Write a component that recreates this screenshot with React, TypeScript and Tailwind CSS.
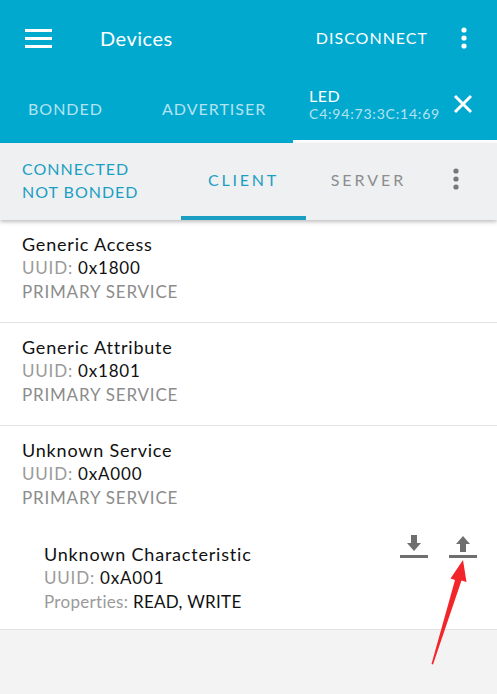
import React from 'react';

const font = { fontFamily: 'Lato, "Open Sans", sans-serif' };

function Kebab({ color }: { color: string }) {
  return (
    <svg width="6" height="22" viewBox="0 0 6 22">
      <circle cx="3" cy="3" r="2.6" fill={color} />
      <circle cx="3" cy="11" r="2.6" fill={color} />
      <circle cx="3" cy="19" r="2.6" fill={color} />
    </svg>
  );
}

function ServiceItem({ name, uuid }: { name: string; uuid: string }) {
  return (
    <div className="pl-[22px] pt-[12px] pb-[18px] leading-[24px]">
      <div className="text-[18px] text-[#111] tracking-[0.8px]">{name}</div>
      <div className="text-[17px] tracking-[0.8px]">
        <span className="text-[#9a9a9a]">UUID: </span>
        <span className="text-[#111]">{uuid}</span>
      </div>
      <div className="text-[17px] text-[#8c8c8c] tracking-[0.8px]">PRIMARY SERVICE</div>
    </div>
  );
}

export default function App() {
  return (
    <div className="relative w-[497px] h-[694px] bg-[#f3f3f3] overflow-hidden" style={font}>
      {/* Top bar */}
      <div className="bg-[#02a9cf] text-white">
        <div className="flex items-center h-[76px] pl-[25px] pr-[30px]">
          <svg width="27" height="20" viewBox="0 0 27 20">
            <rect x="0" y="1" width="27" height="3" fill="white" />
            <rect x="0" y="9" width="27" height="3" fill="white" />
            <rect x="0" y="17" width="27" height="3" fill="white" />
          </svg>
          <div className="ml-[48px] text-[20px] tracking-[0.5px]">Devices</div>
          <div className="ml-auto text-[16px] tracking-[1px]">DISCONNECT</div>
          <div className="ml-[33px]">
            <Kebab color="white" />
          </div>
        </div>
        <div className="flex h-[67px]">
          <div className="w-[146px] flex items-center pl-[28px] pb-[1px] text-[16px] text-[#b4e3f0] tracking-[1px]">BONDED</div>
          <div className="w-[147px] flex items-center pl-[16px] pb-[1px] text-[16px] text-[#b4e3f0] tracking-[1px]">ADVERTISER</div>
          <div className="flex-1 flex flex-col">
            <div className="flex-1 flex items-center pl-[16px] pr-[24px]">
              <div className="leading-[18px] -mt-[6px]">
                <div className="text-[16px] text-white tracking-[0.5px]">LED</div>
                <div className="text-[14px] text-[#b4e3f0] tracking-[0.8px]">C4:94:73:3C:14:69</div>
              </div>
              <svg className="ml-auto -mt-[8px]" width="20" height="20" viewBox="0 0 20 20">
                <path d="M2 2 L18 18 M18 2 L2 18" stroke="white" strokeWidth="3" />
              </svg>
            </div>
            <div className="h-[3px] bg-white" />
          </div>
        </div>
      </div>

      {/* Sub tabs */}
      <div className="relative flex h-[77px] bg-[#eff0f2] shadow-[0_2px_4px_rgba(0,0,0,0.25)]">
        <div className="w-[181px] flex flex-col justify-center pl-[22px] text-[16px] text-[#1a9fc2] leading-[23px] tracking-[1px] pb-[3px]">
          <div>CONNECTED</div>
          <div>NOT BONDED</div>
        </div>
        <div className="w-[125px] flex flex-col">
          <div className="flex-1 flex items-center justify-center text-[16px] text-[#1a9fc2] tracking-[2.8px]">CLIENT</div>
          <div className="h-[4px] bg-[#1a9fc2]" />
        </div>
        <div className="w-[125px] flex items-center justify-center text-[16px] text-[#8d8d8d] tracking-[3px] pb-[4px]">SERVER</div>
        <div className="flex-1 flex items-center justify-center pb-[6px] pr-[16px]">
          <Kebab color="#777" />
        </div>
      </div>

      {/* List */}
      <div className="bg-white">
        <ServiceItem name="Generic Access" uuid="0x1800" />
        <div className="h-px bg-[#e2e2e2]" />
        <ServiceItem name="Generic Attribute" uuid="0x1801" />
        <div className="h-px bg-[#e2e2e2]" />
        <div className="pl-[22px] pt-[12px] leading-[24px]">
          <div className="text-[18px] text-[#111] tracking-[0.8px]">Unknown Service</div>
          <div className="text-[17px] tracking-[0.8px]">
            <span className="text-[#9a9a9a]">UUID: </span>
            <span className="text-[#111]">0xA000</span>
          </div>
          <div className="text-[17px] text-[#8c8c8c] tracking-[0.8px]">PRIMARY SERVICE</div>
        </div>
        <div className="flex pl-[44px] pr-[20px] pt-[32px] pb-[15px] leading-[24px]">
          <div>
            <div className="text-[18px] text-[#111] tracking-[0.8px]">Unknown Characteristic</div>
            <div className="text-[17px] tracking-[0.8px]">
              <span className="text-[#9a9a9a]">UUID: </span>
              <span className="text-[#111]">0xA001</span>
            </div>
            <div className="text-[17px] tracking-[0.3px]">
              <span className="text-[#9a9a9a]">Properties: </span>
              <span className="text-[#111]">READ, WRITE</span>
            </div>
          </div>
          <div className="ml-auto flex gap-[21px] -mt-[7px]">
            <svg width="28" height="24" viewBox="0 0 28 24">
              <path d="M11 0 H17 V8 H21 L14 16 L7 8 H11 Z" fill="#6f6f6f" />
              <rect x="0" y="20" width="28" height="3" fill="#6f6f6f" />
            </svg>
            <svg width="28" height="24" viewBox="0 0 28 24">
              <path d="M14 1 L21 9 H17 V17 H11 V9 H7 Z" fill="#6f6f6f" />
              <rect x="0" y="20" width="28" height="3" fill="#6f6f6f" />
            </svg>
          </div>
        </div>
        <div className="h-px bg-[#e2e2e2]" />
      </div>

      {/* Annotation arrow */}
      <svg className="absolute left-0 top-0 pointer-events-none" width="497" height="694">
        <path d="M431.5 664 L455 580 L450.5 578.5 L463 560 L466.5 582 L461.5 580.5 L433 664.5 Z" fill="#f2262a" />
      </svg>
    </div>
  );
}
